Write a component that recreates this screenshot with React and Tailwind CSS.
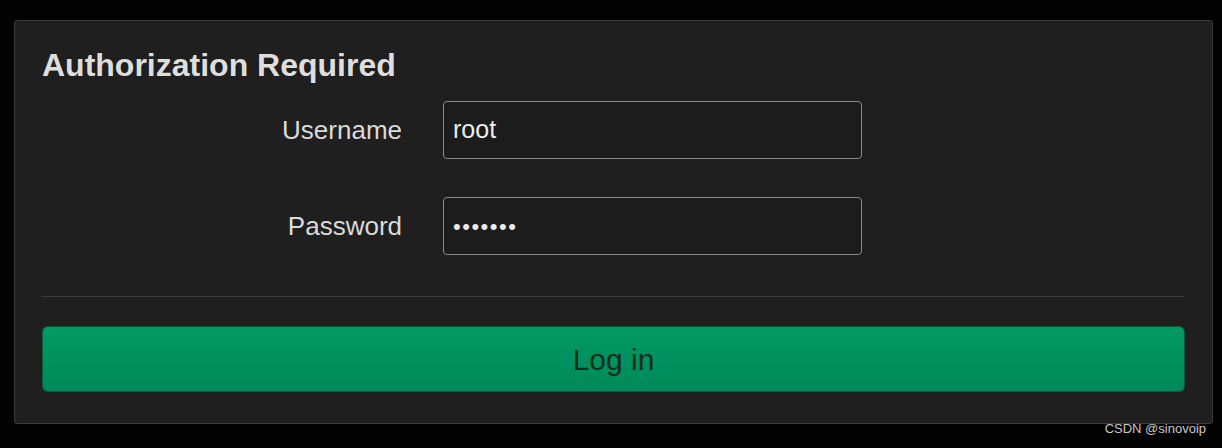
import React from 'react';

export default function App() {
  return (
    <div className="relative h-[448px] w-[1222px] bg-[#030303] pt-[20px] pl-[14px] font-['Liberation_Sans',Arial,sans-serif]">
      {/* Login panel */}
      <div className="w-[1199px] h-[404px] rounded-[3px] border border-[#3a3a3a] bg-[#1f1f1f] px-[27px] pt-[26px]">
        <h2 className="text-[32px] leading-[36px] font-bold text-[#dedede]">Authorization Required</h2>

        <div className="mt-[18px] flex items-center">
          <label className="w-[360px] text-right text-[26px] text-[#dadada]">Username</label>
          <div className="ml-[41px] flex h-[58px] w-[419px] items-center rounded-[4px] border border-[#8a8a8a] bg-[#1c1c1c] px-[9px] text-[25px] text-[#ececec]">
            root
          </div>
        </div>

        <div className="mt-[38px] flex items-center">
          <label className="w-[360px] text-right text-[26px] text-[#dadada]">Password</label>
          <div className="ml-[41px] flex h-[58px] w-[419px] items-center rounded-[4px] border border-[#8a8a8a] bg-[#1c1c1c] px-[9px] text-[22px] tracking-[1.5px] text-[#ececec]">
            •••••••
          </div>
        </div>

        <div className="mt-[41px] h-px bg-[#3a3a3a]" />

        <button className="mt-[29px] flex h-[66px] w-full items-center justify-center rounded-[6px] border border-[#0a5a3a] bg-gradient-to-b from-[#009a65] to-[#00895a] text-[30px] text-[#0b2d1c]">
          Log in
        </button>
      </div>

      <span className="absolute right-[16px] bottom-[10px] text-[13px] text-[#c9c9c9]">CSDN @sinovoip</span>
    </div>
  );
}
